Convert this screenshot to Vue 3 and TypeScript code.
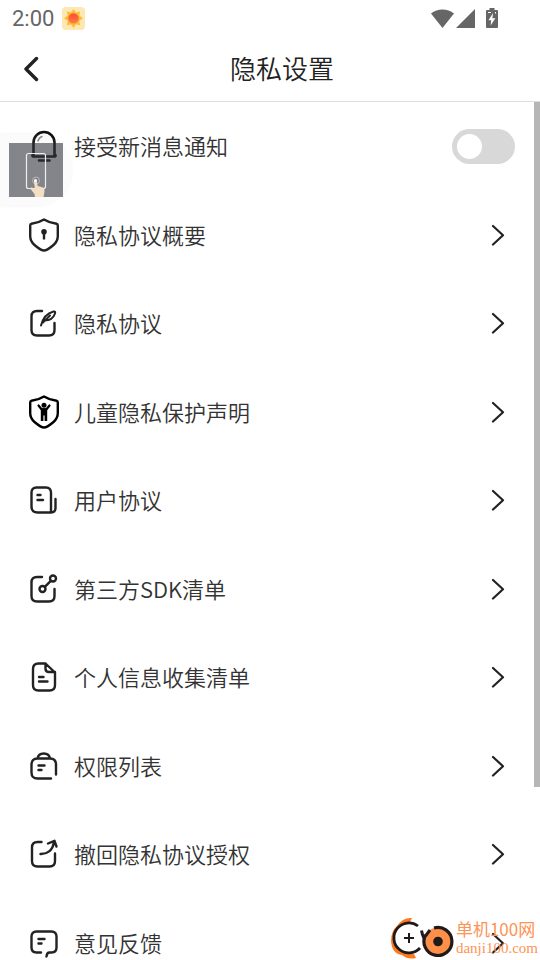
<script setup lang="ts">
import { ref } from 'vue'

type IconName = 'shield' | 'edit' | 'child' | 'agreement' | 'sdk' | 'document' | 'bag' | 'share' | 'feedback'

interface Entry {
  label: string
  icon: IconName
}

const notify = ref(false)

const entries: Entry[] = [
  { label: '隐私协议概要', icon: 'shield' },
  { label: '隐私协议', icon: 'edit' },
  { label: '儿童隐私保护声明', icon: 'child' },
  { label: '用户协议', icon: 'agreement' },
  { label: '第三方SDK清单', icon: 'sdk' },
  { label: '个人信息收集清单', icon: 'document' },
  { label: '权限列表', icon: 'bag' },
  { label: '撤回隐私协议授权', icon: 'share' },
  { label: '意见反馈', icon: 'feedback' },
]
</script>

<template>
  <div class="screen">
    <div class="status">
      <span class="clock">2:00</span>
      <svg class="sun" viewBox="0 0 24 24" aria-hidden="true">
        <defs>
          <linearGradient id="sunCore" x1="0" y1="0" x2="0" y2="1">
            <stop offset="0" stop-color="#ff4a36" />
            <stop offset="1" stop-color="#ff7f45" />
          </linearGradient>
        </defs>
        <rect width="23" height="23" rx="4" fill="#fde7b2" />
        <path d="M11.500 2l2.400 3.600 4.200-1.200-.9 4.200 3.800 2.700-3.800 2.400.9 4.500-4.200-.9L11.500 21l-2.400-3.700-4.200.9.9-4.500L2 11.300l3.800-2.700-.9-4.200 4.200 1.200z" fill="#fdbb36" />
        <circle cx="11.500" cy="11.400" r="5.200" fill="url(#sunCore)" />
      </svg>
      <span class="spacer"></span>
      <svg class="signals" viewBox="0 0 70 22" aria-hidden="true">
        <path d="M1 5.500C7.500 .2 17.500 .2 24 5.500L12.500 20z" fill="#666" />
        <path d="M45 1v19H26z" fill="#666" />
        <path d="M59.500 0h5v2H67a1 1 0 0 1 1 1v16a1 1 0 0 1-1 1H57a1 1 0 0 1-1-1V3a1 1 0 0 1 1-1h2.500z" fill="#666" />
        <path d="M63 5l-4.500 7.200h2.700L60.600 17.500l4.800-7.200h-3z" fill="#fff" />
        <path d="M58 4.500h3M65.500 4v1.500" stroke="#fff" />
      </svg>
    </div>

    <header class="header">
      <button class="back" type="button" aria-label="返回">
        <svg viewBox="0 0 16 26" aria-hidden="true">
          <path d="M12.500 2.500L2 13 12.500 23.500" fill="none" stroke="#222" stroke-width="3.400" stroke-linecap="round" stroke-linejoin="round" />
        </svg>
      </button>
      <h1>隐私设置</h1>
    </header>

    <main class="content">
      <div class="list">
        <label class="row">
          <svg class="icon bell" viewBox="0 0 30 34" aria-hidden="true">
            <path d="M4.500 25.500V13.500a10.500 10.500 0 0 1 21 0v12M4.500 25.500q-2 1-.5 2h22q1.500-1-.5-2M10 31.500h10.500" />
            <path d="M9 12Q10 8.500 13 7.500" stroke="#888" stroke-width="1.500" />
          </svg>
          <span class="label">接受新消息通知</span>
          <input v-model="notify" class="switch" type="checkbox" role="switch" />
        </label>

        <button v-for="entry in entries" :key="entry.label" class="row" type="button">
          <svg class="icon" :class="entry.icon" viewBox="0 0 30 34" aria-hidden="true">
            <template v-if="entry.icon === 'shield'">
              <path d="M15 1.500C11 4 7 5.200 2.500 5.800Q1.200 6 1.200 7.500V18C1.200 22 2.500 24.500 5.500 27 8.500 29.500 12 32.500 15 32.500S21.500 29.500 24.500 27C27.500 24.500 28.800 22 28.800 18V7.500Q28.800 6 27.500 5.800C23 5.200 19 4 15 1.500z" />
              <circle cx="15" cy="13.800" r="1.600" fill="#222" />
              <path d="M15 14v7.500" stroke-linecap="butt" />
            </template>
            <template v-else-if="entry.icon === 'edit'">
              <path d="M13 5H8Q2.500 5 2.500 10.500V24Q2.500 29.500 8 29.500H20Q25.500 29.500 25.500 24V17" />
              <path d="M12 19.500C13.500 13.500 17 7.500 24.500 5.500Q26.800 5 26 7.500C24.500 12 21 14.500 15.500 14.500M14 16.500L21 9.500" stroke-width="2" />
            </template>
            <template v-else-if="entry.icon === 'child'">
              <path d="M15 1.500C11 4 7 5.200 2.500 5.800Q1.200 6 1.200 7.500V18C1.200 22 2.500 24.500 5.500 27 8.500 29.500 12 32.500 15 32.500S21.500 29.500 24.500 27C27.500 24.500 28.800 22 28.800 18V7.500Q28.800 6 27.500 5.800C23 5.200 19 4 15 1.500z" />
              <circle cx="15" cy="10.300" r="2.500" fill="#000" stroke="none" />
              <path d="M9.500 10.500L12.500 14.300H17.500L20.500 10.500" stroke-width="2.200" />
              <path d="M11.800 13.200h6.400V26h-2.600v-5.500h-1.200V26h-2.600z" fill="#000" stroke="none" />
            </template>
            <template v-else-if="entry.icon === 'agreement'">
              <path d="M22 28.500V9.500Q22 4.500 17 4.500H7.500Q2.500 4.500 2.500 9.500V23.500Q2.500 29.500 8.500 29.500H22Q26.500 29.500 26.500 25V16M8.500 12h3M8.500 17h5.500" />
            </template>
            <template v-else-if="entry.icon === 'sdk'">
              <path d="M13 5H8Q2.500 5 2.500 10.500V24Q2.500 29.500 8 29.500H20Q25.500 29.500 25.500 24V17" />
              <circle cx="13.500" cy="17" r="3" />
              <circle cx="24" cy="6.500" r="3" />
              <path d="M15.800 14.800L21.800 8.800" />
            </template>
            <template v-else-if="entry.icon === 'document'">
              <path d="M16.500 3.500H9.500Q4 3.500 4 9V25Q4 30.500 9.500 30.500H20.500Q26 30.500 26 25V12.500L16.500 3.500V8.500Q16.500 12 20 12H26M10 17h4.500M10 21.500h8.500" />
            </template>
            <template v-else-if="entry.icon === 'bag'">
              <path d="M22 29.500H8.500Q2.500 29.500 2.500 23.500V15.500Q2.500 9.500 8.500 9.500H21Q27 9.500 27 15.500V25.500M8.500 9.500C9.500 2.800 20 2.800 21 9.500M9.500 16.500h6M9.500 21h3" />
            </template>
            <template v-else-if="entry.icon === 'share'">
              <path d="M12.500 5H8.500Q3 5 3 10.500V24Q3 29.500 8.500 29.500H20.500Q26 29.500 26 24V16.500M11.500 17C18 17.200 23.500 13.500 24.800 6M19 6.500L25.500 3.800 27.500 9.500" />
            </template>
            <template v-else>
              <path d="M17.500 30.500Q17.800 26.500 20.500 26.500H22.500Q27.500 26.500 27.500 21.500V10.500Q27.500 5.500 22.500 5.500H7.500Q2.500 5.500 2.500 10.500V21.500Q2.500 26.500 7.500 26.500H12M9.500 13h6M9.500 17.500h3" />
            </template>
          </svg>
          <span class="label">{{ entry.label }}</span>
          <svg class="chevron" viewBox="0 0 14 22" aria-hidden="true">
            <path d="M2 2L12 11.200 2 20.500" fill="none" stroke="#222" stroke-width="2.200" stroke-linecap="round" stroke-linejoin="round" />
          </svg>
        </button>
      </div>
    </main>
    <div class="thumb"></div>

    <div class="floater">
      <svg viewBox="0 0 54 54" aria-hidden="true">
        <rect width="54" height="54" fill="#2f313b" fill-opacity=".58" />
        <rect x="17.500" y="10.500" width="19" height="35" rx="2" fill="none" stroke="#eee" stroke-width="1.200" />
        <circle cx="27" cy="37.500" r="3.500" fill="none" stroke="#b5b5bb" />
        <path d="M26 54l-.5-3-4-5q-.5-2 1.500-1.500l3 2-1-8q1-3 2.700 0l1 4.500 5.300 1.500q2 1 1.500 4L34.500 54z" fill="#f5dfc4" />
        <circle cx="26.500" cy="37.500" r="1.500" fill="#fff" />
      </svg>
    </div>

    <div class="watermark">
      <svg viewBox="0 0 64 44" aria-hidden="true">
        <path d="M22 2Q13 1 7 10 1 15 1 25 2 38 12 39 18 44 26 42L24 38Q13 38 8 32 3 25 6 15 10 7 20 6z" fill="#ff7a1c" />
        <circle cx="19" cy="22" r="15" fill="#fff" />
        <path d="M28 10A15 15 0 1 0 30 32" fill="none" stroke="#201a1b" stroke-width="2.800" />
        <path d="M19 17v10M14 22h10" stroke="#201a1b" stroke-width="2" />
        <circle cx="48" cy="25.500" r="14" fill="#fd8f49" />
        <path d="M44 12A14 14 0 1 1 35.500 19" fill="none" stroke="#201a1b" stroke-width="3.200" />
        <path d="M31.500 14.500Q32 18 34 22M40 14L35.500 20" fill="none" stroke="#201a1b" stroke-width="3" />
        <circle cx="48" cy="25.500" r="4.800" fill="#201a1b" />
      </svg>
      <div class="brand">
        <span class="brand-name">单机100网</span>
        <span class="brand-url">danji100.com</span>
      </div>
    </div>
  </div>
</template>

<style>
body {
  background: #fff;
}
</style>

<style scoped>
.screen {
  position: relative;
  display: flex;
  flex-direction: column;
  height: 100vh;
  overflow: hidden;
  background: #fff;
  color: #333;
  font-family: "Noto Sans CJK SC", sans-serif;
  font-weight: 350;
}

.status {
  display: flex;
  flex: none;
  align-items: center;
  height: 37px;
  padding: 0 40px 0 12px;
}

.clock {
  color: #666;
  font-family: Roboto, sans-serif;
  font-size: 22px;
  font-weight: 400;
}

.sun {
  width: 24px;
  height: 24px;
  margin-left: 8px;
}

.spacer {
  flex: 1;
}

.signals {
  width: 70px;
  height: 22px;
}

.header {
  display: grid;
  flex: none;
  grid-template-columns: 64px 1fr 40px;
  align-items: center;
  height: 64px;
  border-bottom: 1px solid #ddd;
}

.header h1 {
  margin: 0;
  padding-bottom: 2px;
  color: #222;
  font-size: 26px;
  font-weight: 350;
  line-height: 40px;
  text-align: center;
}

.back {
  display: flex;
  padding: 4px 24px;
  border: 0;
  background: none;
}

.back svg {
  width: 16px;
  height: 26px;
}

.content {
  flex: 1;
  min-height: 0;
  overflow-y: auto;
  scrollbar-width: none;
}

.list {
  display: grid;
  grid-auto-rows: 1fr;
  min-height: 885px;
}

.row {
  display: flex;
  align-items: center;
  gap: 15px;
  width: 100%;
  padding: 0 35px 0 29px;
  border: 0;
  background: none;
  color: inherit;
  font-family: inherit;
  font-size: 22px;
  font-weight: inherit;
  line-height: 32px;
  text-align: left;
  box-sizing: border-box;
}

label.row {
  padding-right: 25px;
}

.icon {
  flex: none;
  width: 30px;
  height: 34px;
  fill: none;
  stroke: #222;
  stroke-width: 2.4;
  stroke-linecap: round;
  stroke-linejoin: round;
}

.icon.child {
  stroke: #000;
}

.icon.bell {
  stroke: #111;
  stroke-width: 2.6;
}

.label {
  flex: 1;
  padding-bottom: 2px;
}

.chevron {
  flex: none;
  width: 14px;
  height: 22px;
}

.switch {
  display: flex;
  flex: none;
  align-items: center;
  width: 63px;
  height: 35px;
  margin: 0;
  padding: 0 5px;
  border-radius: 18px;
  background: #d8d8d8;
  appearance: none;
  box-sizing: border-box;
}

.switch::before {
  width: 25px;
  height: 25px;
  border-radius: 50%;
  background: #fff;
  content: "";
}

.switch:checked {
  justify-content: flex-end;
  background: #4cd964;
}

.thumb {
  position: absolute;
  top: 102px;
  right: 0;
  width: 6px;
  height: 685px;
  background: #b6b6b6;
}

.floater {
  position: absolute;
  top: 134px;
  left: 0;
  padding: 9px;
  border-radius: 0 36px 36px 0;
  background: rgba(190, 190, 190, 0.06);
  box-shadow: 0 0 3px rgba(0, 0, 0, 0.06);
}

.floater svg {
  display: block;
  width: 54px;
  height: 54px;
}

.watermark {
  position: absolute;
  right: 2px;
  bottom: 0;
  display: flex;
  align-items: center;
  gap: 2px;
  color: #fd9355;
  font-weight: 400;
  pointer-events: none;
}

.watermark svg {
  width: 64px;
  height: 44px;
}

.brand {
  display: flex;
  flex-direction: column;
}

.brand-name {
  font-size: 17px;
  line-height: 20px;
}

.brand-url {
  font-family: "Liberation Serif", serif;
  font-size: 15px;
  line-height: 18px;
}
</style>
